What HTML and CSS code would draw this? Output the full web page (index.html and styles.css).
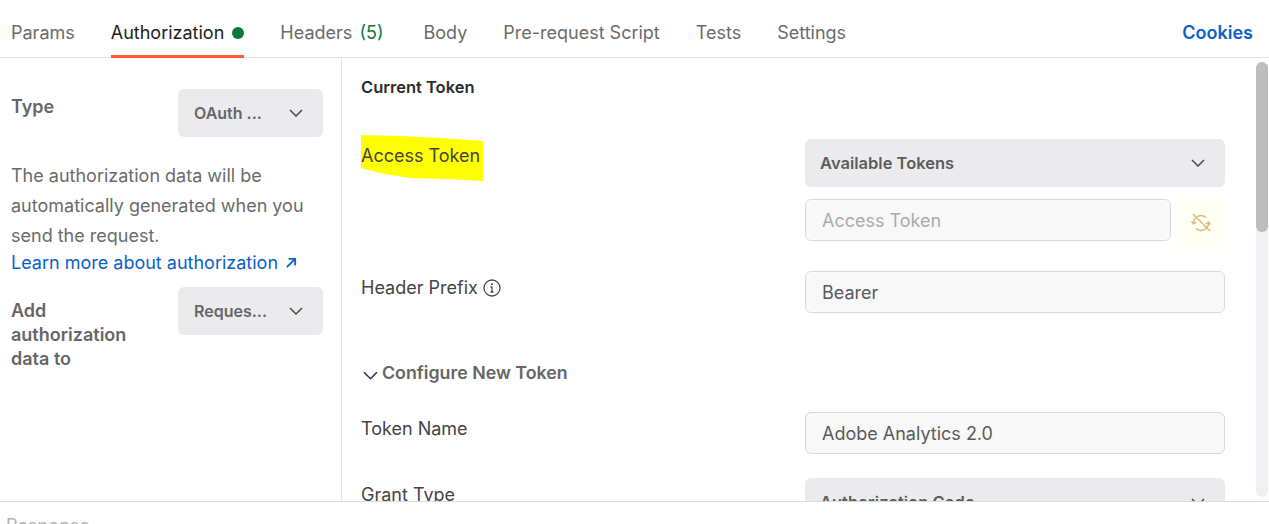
FILE: index.html
```html
<!DOCTYPE html>
<html lang="en">
<head>
    <meta charset="UTF-8">
    <title>Authorization</title>
    <link rel="stylesheet" href="styles.css">
</head>
<body>
    <nav class="tabs">
        <a class="tab">Params</a>
        <a class="tab active">Authorization <span class="dot"></span></a>
        <a class="tab">Headers <span class="count">(5)</span></a>
        <a class="tab tab-body">Body</a>
        <a class="tab">Pre-request Script</a>
        <a class="tab">Tests</a>
        <a class="tab">Settings</a>
        <a class="cookies">Cookies</a>
    </nav>

    <main class="content">
        <aside class="side">
            <div class="side-row">
                <div class="side-label">Type</div>
                <div class="side-select"><span>OAuth ...</span>
                    <svg class="chev" viewBox="0 0 14 8"><path d="M1 1l6 6 6-6"/></svg>
                </div>
            </div>
            <p class="side-text">The authorization data will be automatically generated when you send the request.</p>
            <a class="learn">Learn more about authorization
                <svg class="arrow" viewBox="0 0 10 10"><path d="M1.500 8.500L8.500 1.500M3 1.500h5.500V7"/></svg>
            </a>
            <div class="side-row side-row-add">
                <div class="side-label">Add authorization data to</div>
                <div class="side-select"><span>Reques...</span>
                    <svg class="chev" viewBox="0 0 14 8"><path d="M1 1l6 6 6-6"/></svg>
                </div>
            </div>
        </aside>

        <section class="panel">
            <h3 class="panel-title">Current Token</h3>

            <div class="row row-token">
                <div class="label">
                    <svg class="marker" viewBox="0 0 124 46" preserveAspectRatio="none"><path d="M0 0L40 1 80 3 123 6 123 46 85 44 50 43 24 39 0 33z"/></svg>
                    <span class="label-text">Access Token</span>
                </div>
                <div class="fields">
                    <div class="select"><span>Available Tokens</span>
                        <svg class="chev" viewBox="0 0 14 8"><path d="M1 1l6 6 6-6"/></svg>
                    </div>
                    <div class="input-line">
                        <div class="input placeholder">Access Token</div>
                        <div class="sync">
                            <svg viewBox="0 0 24 24"><path d="M4.500 12.500A7.500 7.500 0 0 1 17 6.500M19.500 11.500A7.500 7.500 0 0 1 7 17.500M2.500 10.500l2 2.500 2.500-2M21.500 13.500l-2-2.500-2.500 2M4 3l17 17"/></svg>
                        </div>
                    </div>
                </div>
            </div>

            <div class="row row-prefix">
                <div class="label">Header Prefix
                    <svg class="info" viewBox="0 0 18 18"><circle cx="9" cy="9" r="8"/><path d="M9 8v5M7.500 13h3M7.500 8H9"/><circle class="info-dot" cx="9" cy="5.200" r="1"/></svg>
                </div>
                <div class="input">Bearer</div>
            </div>

            <h3 class="configure">
                <svg viewBox="0 0 14 8"><path d="M1 1l6 6 6-6"/></svg>
                Configure New Token
            </h3>

            <div class="row row-name">
                <div class="label">Token Name</div>
                <div class="input">Adobe Analytics 2.0</div>
            </div>

            <div class="row row-grant">
                <div class="label">Grant Type</div>
                <div class="select"><span>Authorization Code</span>
                    <svg class="chev" viewBox="0 0 14 8"><path d="M1 1l6 6 6-6"/></svg>
                </div>
            </div>
        </section>

        <div class="scrollbar"><div class="thumb"></div></div>
    </main>

    <footer class="response">Response</footer>
</body>
</html>
```

FILE: styles.css
```css
* {
    box-sizing: border-box;
}
html, body {
    height: 100%;
}
body {
    margin: 0;
    height: 524px;
    overflow: hidden;
    display: flex;
    flex-direction: column;
    background: #fff;
    font-family: Inter, "Liberation Sans", sans-serif;
    font-size: 18px;
    color: #3a3a3a;
}
svg {
    fill: none;
    stroke: currentColor;
}

/* tabs */
.tabs {
    flex: none;
    height: 58px;
    display: flex;
    gap: 36px;
    padding: 0 16px 0 11px;
    border-bottom: 1px solid #e6e2e8;
}
.tab {
    height: 58px;
    line-height: 65px;
    color: #6b6b6b;
    white-space: nowrap;
}
.tab.active {
    color: #212121;
    border-bottom: 3px solid #ff5a2c;
}
.tab-body {
    margin-left: 4px;
}
.dot {
    display: inline-block;
    width: 12px;
    height: 12px;
    margin-left: 3px;
    border-radius: 50%;
    background: #0a7a3b;
}
.count {
    margin-left: 2px;
    color: #0a7a3b;
}
.cookies {
    margin-left: auto;
    line-height: 65px;
    font-weight: 600;
    color: #0b5fc9;
}

/* main area */
.content {
    flex: none;
    height: 444px;
    display: flex;
    overflow: hidden;
    border-bottom: 1px solid #dcdcdc;
}
.side {
    flex: none;
    width: 342px;
    padding: 31px 18px 0 11px;
    border-right: 1px solid #dfe6ea;
}
.side-row {
    display: flex;
    justify-content: space-between;
}
.side-label {
    width: 130px;
    margin-top: 6px;
    font-weight: 600;
    line-height: 24px;
    color: #666;
}
.side-select {
    width: 145px;
    height: 48px;
    padding: 0 20px 0 16px;
    display: flex;
    align-items: center;
    justify-content: space-between;
    border-radius: 6px;
    background: #ebebee;
    font-weight: 600;
    font-size: 16px;
    color: #666;
}
.chev {
    width: 14px;
    height: 8px;
    stroke-width: 1.500;
    color: #4a4a4a;
}
.side-text {
    margin: 24px 0 0;
    line-height: 30px;
    color: #6b6b6b;
}
.learn {
    display: block;
    line-height: 24px;
    color: #0b5fc9;
    white-space: nowrap;
}
.arrow {
    width: 12px;
    height: 12px;
    margin-left: 2px;
    stroke-width: 1.500;
}
.side-row-add {
    margin-top: 12px;
}
.side-row-add .side-label {
    margin-top: 12px;
}

/* right panel */
.panel {
    flex: 1;
    padding: 19px 31px 0 19px;
}
.panel-title {
    margin: 0;
    font-size: 16.500px;
    line-height: 20px;
    font-weight: 600;
    color: #2c2c2c;
}
.row {
    display: flex;
    justify-content: space-between;
    align-items: flex-start;
}
.row-token {
    margin-top: 42px;
}
.row-prefix {
    margin-top: 24px;
}
.row-name {
    margin-top: 27px;
}
.row-grant {
    margin-top: 24px;
}
.label {
    position: relative;
    display: flex;
    align-items: center;
    gap: 5px;
    line-height: 34px;
    color: #444;
}
.label-text {
    position: relative;
}
.marker {
    position: absolute;
    left: 0;
    top: -4px;
    width: 123px;
    height: 46px;
    fill: #ffff00;
    stroke: none;
}
.info {
    width: 18px;
    height: 18px;
    stroke-width: 1.300;
    color: #4a4a4a;
}
.info-dot {
    fill: currentColor;
    stroke: none;
}
.fields {
    width: 420px;
}
.select, .input {
    width: 420px;
    border-radius: 6px;
    display: flex;
    align-items: center;
}
.select {
    height: 48px;
    padding: 0 20px 0 15px;
    justify-content: space-between;
    background: #ebebee;
    font-weight: 600;
    font-size: 16.500px;
    color: #5c5c5c;
}
.input {
    height: 42px;
    padding: 0 16px;
    border: 1px solid #dcd9dd;
    background: #f8f8f8;
    color: #5a5a5a;
}
.input-line {
    display: flex;
    justify-content: space-between;
    margin-top: 12px;
}
.input-line .input {
    width: 366px;
}
.placeholder {
    color: #ababab;
}
.sync {
    width: 48px;
    height: 48px;
    display: flex;
    align-items: center;
    justify-content: center;
    border-radius: 6px;
    background: #fffef2;
    color: #d9bd80;
}
.sync svg {
    width: 24px;
    height: 24px;
    stroke-width: 1.500;
}
.configure {
    margin: 48px 0 0;
    display: flex;
    align-items: center;
    gap: 4px;
    font-size: 17.800px;
    line-height: 24px;
    font-weight: 600;
    color: #666;
}
.configure svg {
    width: 15px;
    height: 9px;
    margin: 5px 0 0 2px;
    stroke-width: 1.500;
    color: #333;
}
.scrollbar {
    flex: none;
    width: 12px;
    margin: 4px 1px 4px 0;
    border-radius: 6px;
    background: #f0f0f4;
}
.thumb {
    height: 170px;
    border-radius: 6px;
    background: #bdbdbd;
}

/* response */
.response {
    flex: none;
    padding-left: 6px;
    line-height: 48px;
    color: #b4b4b4;
}
```
